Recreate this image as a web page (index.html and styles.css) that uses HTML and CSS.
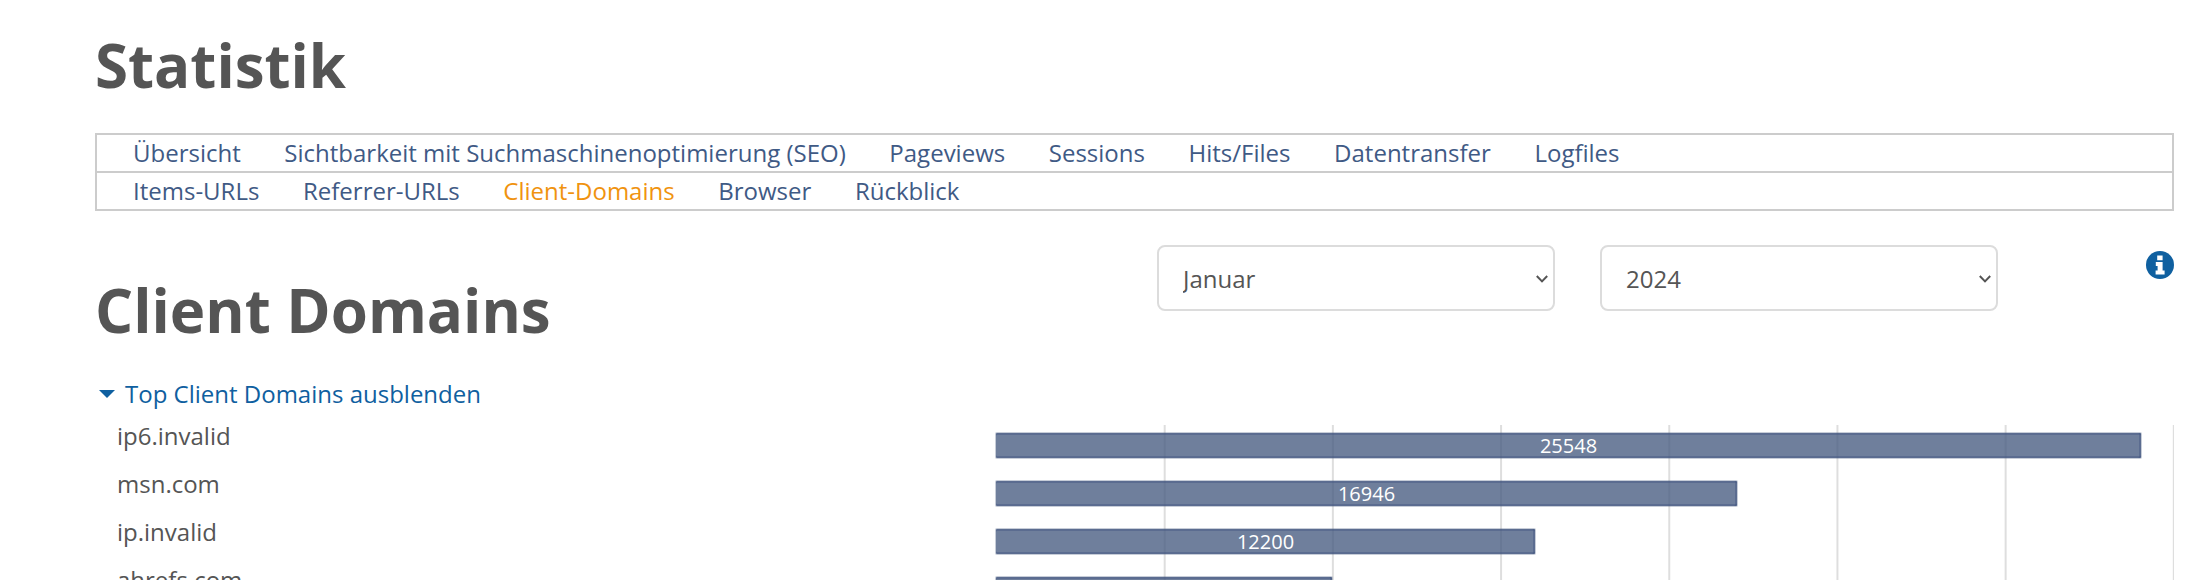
FILE: index.html
```html
<!DOCTYPE html>
<html lang="de">
<head>
<meta charset="utf-8">
<title>Statistik</title>
<link rel="stylesheet" href="styles.css">
</head>
<body>
<main class="page">
  <h1 class="title">Statistik</h1>
  <nav class="tabs">
    <ul class="tab-row">
      <li><a href="#">Übersicht</a></li>
      <li><a href="#">Sichtbarkeit mit Suchmaschinenoptimierung (SEO)</a></li>
      <li><a href="#">Pageviews</a></li>
      <li><a href="#">Sessions</a></li>
      <li><a href="#">Hits/Files</a></li>
      <li><a href="#">Datentransfer</a></li>
      <li><a href="#">Logfiles</a></li>
    </ul>
    <ul class="tab-row">
      <li><a href="#">Items-URLs</a></li>
      <li><a href="#">Referrer-URLs</a></li>
      <li><a href="#" class="active">Client-Domains</a></li>
      <li><a href="#">Browser</a></li>
      <li><a href="#">Rückblick</a></li>
    </ul>
  </nav>
  <section class="head">
    <h2 class="subtitle">Client Domains</h2>
    <div class="filters">
      <select class="picker"><option>Januar</option></select>
      <select class="picker"><option>2024</option></select>
    </div>
    <svg class="info" viewBox="0 0 28 28" aria-hidden="true">
      <circle cx="14" cy="14" r="14" fill="#0f60a0"/>
      <path fill="#fff" d="M11.2 4.6h5.4v4.6h-5.4zM9.8 11h6.8v8.6h2v3.9H9.6v-3.9h2v-4.7H9.8z"/>
    </svg>
  </section>
  <button class="toggle" type="button"><span class="caret"></span>Top Client Domains ausblenden</button>
  <section class="report">
    <ul class="labels">
      <li>ip6.invalid</li>
      <li>msn.com</li>
      <li>ip.invalid</li>
      <li>ahrefs.com</li>
    </ul>
    <div class="chart">
      <div class="bar" style="width:1147px">25548</div>
      <div class="bar" style="width:743px">16946</div>
      <div class="bar" style="width:541px">12200</div>
      <div class="bar" style="width:338px"></div>
    </div>
  </section>
</main>
</body>
</html>
```
FILE: styles.css
```css
* { box-sizing: border-box; }
html, body { margin: 0; height: 580px; overflow: hidden; background: #fff; }
body { font-family: "Open Sans", sans-serif; font-size: 24px; color: #555; }
ul { list-style: none; margin: 0; padding: 0; }
a { text-decoration: none; }
.page { padding: 23px 14px 0 95px; }
.title { margin: 0; font-size: 60px; line-height: 84px; font-weight: 700; color: #555; }
.tabs { margin-top: 26px; border: 2px solid #ccc; }
.tab-row { display: flex; gap: 43.6px; padding: 0 36px; height: 36px; align-items: center; }
.tab-row + .tab-row { border-top: 2px solid #ccc; height: 38px; }
.tab-row a { color: #3f5a85; line-height: 36px; }
.tab-row a.active { color: #f0930f; }
.head { display: flex; align-items: flex-start; margin-top: 34px; height: 137px; }
.subtitle { margin: 23px 0 0; width: 1062px; font-size: 60px; line-height: 85px; font-weight: 700; color: #555; }
.filters { display: flex; gap: 45px; }
.picker { appearance: none; width: 398px; height: 66px; padding: 0 24px; font: 24px "Open Sans", sans-serif; color: #555; border: 2px solid #dcdcdc; border-radius: 8px; background: #fff url("data:image/svg+xml,%3Csvg xmlns='http://www.w3.org/2000/svg' width='12' height='8'%3E%3Cpath d='M.8 1l5.2 5.4L11.2 1' fill='none' stroke='%23555' stroke-width='2'/%3E%3C/svg%3E") no-repeat right 5px top 28px; }
.info { width: 28px; height: 28px; margin: 6px 0 0 auto; }
.toggle { display: flex; align-items: center; padding: 0; margin: -5px 0 0 4px; border: 0; background: none; font: 24px/30px "Open Sans", sans-serif; color: #0f60a0; height: 34px; }
.caret { width: 0; height: 0; margin-right: 10px; border: 8px solid transparent; border-top: 8px solid #0f60a0; border-bottom: 0; }
.report { display: grid; grid-template-columns: 900px 1fr; margin-top: 14px; }
.labels { padding-left: 22px; margin-top: -7px; }
.labels li { height: 48px; line-height: 36px; color: #555; }
.chart { height: 200px; padding-top: 7px; background: linear-gradient(#fff, #fff) 0 0 / 3px 100% no-repeat, linear-gradient(to right, transparent calc(100% - 2px), #dedede calc(100% - 2px)) 2.5px 0 / 168.2px 100%; }
.bar { height: 27px; margin-bottom: 21px; color: #fff; font-size: 20px; line-height: 25px; text-align: center; background: rgba(68, 88, 126, .77); background-clip: padding-box; border: 1px solid rgba(68, 88, 126, .3); border-radius: 2px; box-shadow: inset 0 2px 0 rgba(60, 80, 125, .4), inset 0 -2px 0 rgba(60, 80, 125, .4), inset -2px 0 0 rgba(60, 80, 125, .4); }
```
